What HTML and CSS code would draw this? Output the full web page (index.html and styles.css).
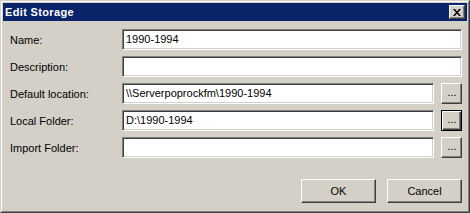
FILE: index.html
```html
<!DOCTYPE html>
<html>
<head>
<meta charset="utf-8">
<link rel="stylesheet" href="styles.css">
</head>
<body>
<div class="window">
  <div class="frame">
    <div class="titlebar">
      <span class="title">Edit Storage</span>
      <button class="close" type="button" aria-label="Close">
        <svg width="8" height="7" viewBox="0 0 8 7"><path d="M0 0h2l2 2.5L6 0h2L5 3.5 8 7H6L4 4.5 2 7H0l3-3.5z" fill="#000"/></svg>
      </button>
    </div>
    <div class="form">
      <div class="row">
        <label class="label">Name:</label>
        <div class="field">1990-1994</div>
      </div>
      <div class="row">
        <label class="label">Description:</label>
        <div class="field"></div>
      </div>
      <div class="row">
        <label class="label">Default location:</label>
        <div class="field">\\Serverpoprockfm\1990-1994</div>
        <button class="btn browse" type="button">...</button>
      </div>
      <div class="row">
        <label class="label">Local Folder:</label>
        <div class="field">D:\1990-1994</div>
        <button class="btn browse focused" type="button">...</button>
      </div>
      <div class="row">
        <label class="label">Import Folder:</label>
        <div class="field"></div>
        <button class="btn browse" type="button">...</button>
      </div>
      <div class="actions">
        <button class="btn action" type="button">OK</button>
        <button class="btn action" type="button">Cancel</button>
      </div>
    </div>
  </div>
</div>
</body>
</html>
```
FILE: styles.css
```css
* { box-sizing: border-box; }
html, body {
  margin: 0;
  padding: 0;
  background: #d4d0c8;
}
body {
  font-family: "Liberation Sans", Arial, sans-serif;
  font-size: 11px;
  color: #000;
}
.window {
  width: 470px;
  height: 213px;
  border: 1px solid;
  border-color: #d4d0c8 #404040 #404040 #d4d0c8;
  background: #d4d0c8;
}
.frame {
  height: 100%;
  border: 1px solid;
  border-color: #ffffff #808080 #808080 #ffffff;
  padding: 1px;
}
.titlebar {
  height: 18px;
  background: #0a246a;
  display: flex;
  align-items: center;
  justify-content: space-between;
  padding: 0 2px 0 2px;
}
.title {
  color: #fff;
  font-weight: bold;
  font-size: 11px;
  letter-spacing: 0.35px;
  padding-left: 0;
}
.close {
  width: 16px;
  height: 14px;
  padding: 0;
  margin: 0;
  background: #d4d0c8;
  border: 1px solid;
  border-color: #fff #404040 #404040 #fff;
  box-shadow: inset -1px -1px #808080;
  display: flex;
  align-items: center;
  justify-content: center;
}
.close svg { display: block; margin-left: 0; }
.form {
  padding: 8px 5px 0 7px;
  display: flex;
  flex-direction: column;
  gap: 6px;
}
.row {
  display: flex;
  align-items: center;
  height: 21px;
}
.label {
  width: 112px;
  flex: none;
}
.field {
  flex: 1;
  height: 21px;
  background: #fff;
  border: 1px solid;
  border-color: #808080 #fff #fff #808080;
  box-shadow: inset 1px 1px #404040, inset -1px -1px #d4d0c8;
  padding: 0 3px;
  line-height: 19px;
  white-space: nowrap;
  overflow: hidden;
}
.btn {
  font-family: "Liberation Sans", Arial, sans-serif;
  font-size: 11px;
  color: #000;
  background: #d4d0c8;
  border: 1px solid;
  border-color: #fff #404040 #404040 #fff;
  box-shadow: inset -1px -1px #808080;
  padding: 0;
  margin: 0;
}
.browse {
  width: 21px;
  height: 21px;
  margin-left: 7px;
  flex: none;
  line-height: 15px;
  padding: 0 0 3px 1px;
}
.browse.focused {
  border: 1px solid #000;
  box-shadow: inset 1px 1px #fff, inset -1px -1px #404040, inset -2px -2px #808080;
}
.actions {
  display: flex;
  justify-content: flex-end;
  gap: 11px;
  margin-top: 15px;
}
.action {
  width: 75px;
  height: 24px;
}
```
